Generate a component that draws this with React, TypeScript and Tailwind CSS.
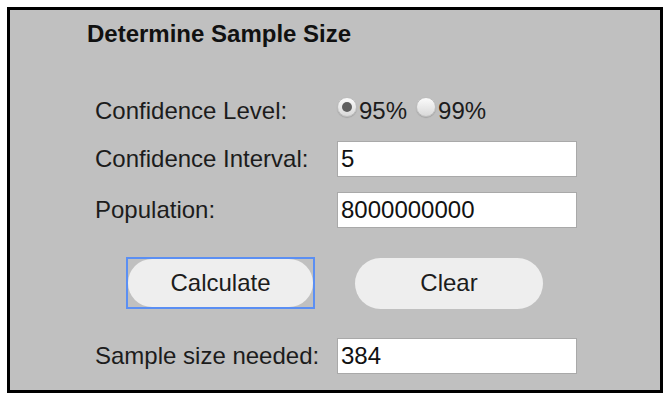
const font = "font-['Liberation_Sans',Arial,sans-serif]";

const Radio = ({ checked }: { checked?: boolean }) => (
  <span className="relative top-[-4px] flex h-[20px] w-[20px] items-center justify-center rounded-full border border-[#bdbdbd] bg-gradient-to-b from-[#fbfbfb] to-[#d9d9d9] shadow-[0_1px_1px_rgba(0,0,0,0.15)]">
    {checked && <span className="h-[10px] w-[10px] rounded-full bg-[#5f5f5f]" />}
  </span>
);

const Field = ({ label, value }: { label: string; value: string }) => (
  <div className="flex items-center">
    <label className="w-[242px] shrink-0">{label}</label>
    <input
      defaultValue={value}
      className={`${font} h-[36px] w-[240px] border border-[#a9a9a9] bg-white px-[3px] text-[24px] text-[#111] outline-none`}
    />
  </div>
);

const App = () => {
  return (
    <div className={`${font} h-[401px] w-[671px] bg-white pl-[7px] pt-[7px]`}>
      <div className="flex h-[386px] w-[656px] flex-col border-[3px] border-black bg-[#c0c0c0] pl-[85px] text-[24px] leading-[28px] text-[#1c1c1c]">
        {/* Title */}
        <h2 className="ml-[-8px] mt-[10px] text-[24px] font-bold leading-[28px] text-[#111]">
          Determine Sample Size
        </h2>

        {/* Confidence level */}
        <div className="mt-[49px] flex items-center">
          <span className="w-[242px] shrink-0">Confidence Level:</span>
          <div className="flex items-center">
            <Radio checked />
            <span className="ml-[2px]">95%</span>
            <span className="ml-[9px]">
              <Radio />
            </span>
            <span className="ml-[2px]">99%</span>
          </div>
        </div>

        <div className="mt-[16px] flex flex-col gap-[15px]">
          <Field label="Confidence Interval:" value="5" />
          <Field label="Population:" value="8000000000" />
        </div>

        {/* Buttons */}
        <div className="mt-[29px] flex items-center">
          <div className="ml-[31px] flex h-[52px] w-[189px] items-center justify-center outline outline-2 outline-offset-[-2px] outline-[#5b8ff3]">
            <button className="flex h-[48px] w-[185px] items-center justify-center rounded-full bg-[#eeeeee] text-[#1c1c1c]">
              Calculate
            </button>
          </div>
          <button className="ml-[40px] flex h-[51px] w-[188px] items-center justify-center rounded-full bg-[#eeeeee] text-[#1c1c1c]">
            Clear
          </button>
        </div>

        <div className="mt-[29px]">
          <Field label="Sample size needed:" value="384" />
        </div>
      </div>
    </div>
  );
};

export default App;
